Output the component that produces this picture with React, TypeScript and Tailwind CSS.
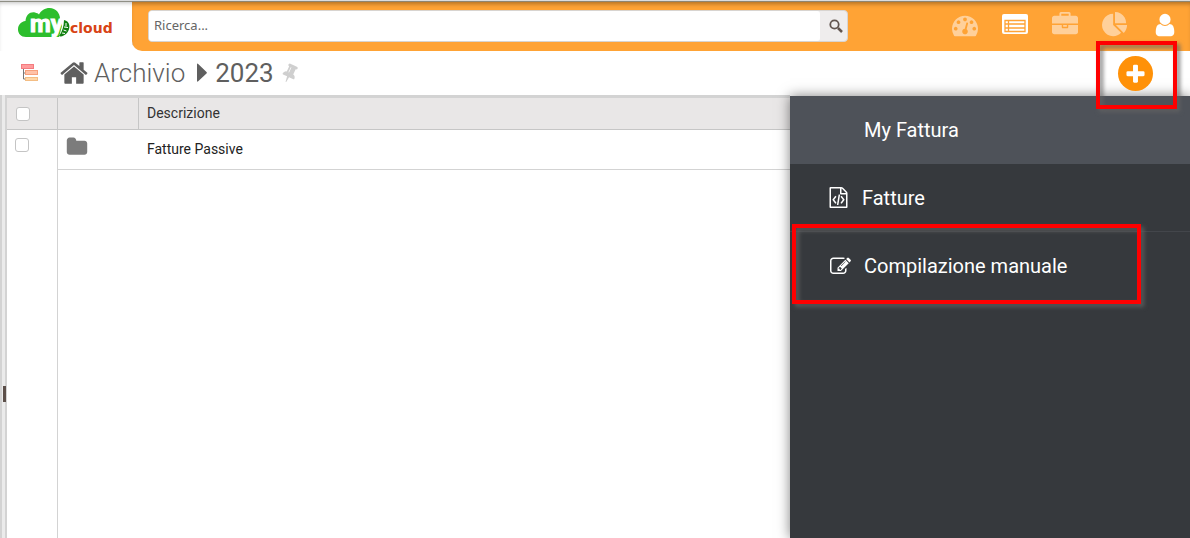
import type { ReactNode } from "react";

const icons = {
  gauge:
    "M384 1152q0-53-37.5-90.5t-90.5-37.5-90.5 37.5-37.5 90.5 37.5 90.5 90.5 37.5 90.5-37.5 37.5-90.5zm192-448q0-53-37.5-90.5t-90.5-37.5-90.5 37.5-37.5 90.5 37.5 90.5 90.5 37.5 90.5-37.5 37.5-90.5zm428 481l101-382q6-26-7.5-48.5t-38.5-29.5-48 6.5-30 39.5l-101 382q-60 5-107 43.5t-63 98.5q-20 77 20 146t117 89 146-20 89-117q16-60-6-117t-72-91zm660-33q0-53-37.5-90.5t-90.5-37.5-90.5 37.5-37.5 90.5 37.5 90.5 90.5 37.5 90.5-37.5 37.5-90.5zm-640-640q0-53-37.5-90.5t-90.5-37.5-90.5 37.5-37.5 90.5 37.5 90.5 90.5 37.5 90.5-37.5 37.5-90.5zm448 192q0-53-37.5-90.5t-90.5-37.5-90.5 37.5-37.5 90.5 37.5 90.5 90.5 37.5 90.5-37.5 37.5-90.5zm320 448q0 261-141 483-19 29-54 29h-1402q-35 0-54-29-141-221-141-483 0-182 71-348t191-286 286-191 348-71 348 71 286 191 191 286 71 348z",
  briefcase:
    "M640 256h512v-128h-512v128zm1152 640v480q0 66-47 113t-113 47h-1472q-66 0-113-47t-47-113v-480h672v160q0 26 19 45t45 19h320q26 0 45-19t19-45v-160h672zm-768 0v128h-256v-128h256zm768-480v384h-1792v-384q0-66 47-113t113-47h352v-160q0-40 28-68t68-28h576q40 0 68 28t28 68v160h352q66 0 113 47t47 113z",
  pie: "M768 890l546 546q-106 108-247.5 168t-298.5 60q-209 0-385.5-103t-279.5-279.5-103-385.5 103-385.5 279.5-279.5 385.5-103v762zm187 6h773q0 157-60 298.5t-168 247.5zm709-128h-768v-768q209 0 385.5 103t279.5 279.5 103 385.5z",
  user: "M1536 1399q0 109-62.5 187t-150.5 78h-854q-88 0-150.5-78t-62.5-187q0-85 8.5-160.5t31.5-152 58.5-131 94-89 134.5-34.5q131 128 313 128t313-128q76 0 134.5 34.5t94 89 58.5 131 31.5 152 8.5 160.5zm-256-887q0 159-112.5 271.5t-271.5 112.5-271.5-112.5-112.5-271.5 112.5-271.5 271.5-112.5 271.5 112.5 112.5 271.5z",
  home: "M1472 992v480q0 26-19 45t-45 19h-384v-384h-256v384h-384q-26 0-45-19t-19-45v-480q0-1 .5-3t.5-3l575-474 575 474q1 2 1 6zm223-69l-62 74q-8 9-21 11h-3q-13 0-21-7l-692-577-692 577q-12 8-24 7-13-2-21-11l-62-74q-8-10-7-23.5t11-21.5l719-599q32-26 76-26t76 26l244 204v-195q0-14 9-23t23-9h192q14 0 23 9t9 23v408l219 182q10 8 11 21.5t-7 23.5z",
  pin: "M800 864v-448q0-14-9-23t-23-9-23 9-9 23v448q0 14 9 23t23 9 23-9 9-23zm672 352q0 26-19 45t-45 19h-429l-51 483q-2 12-10.5 20.5t-20.5 8.5h-1q-27 0-32-27l-76-485h-404q-26 0-45-19t-19-45q0-123 78.5-221.5t177.5-98.5v-512q-52 0-90-38t-38-90 38-90 90-38h640q52 0 90 38t38 90-38 90-90 38v512q99 0 177.5 98.5t78.5 221.5z",
  plus: "M1600 736v192q0 40-28 68t-68 28h-416v416q0 40-28 68t-68 28h-192q-40 0-68-28t-28-68v-416h-416q-40 0-68-28t-28-68v-192q0-40 28-68t68-28h416v-416q0-40 28-68t68-28h192q40 0 68 28t28 68v416h416q40 0 68 28t28 68z",
  folder:
    "M1728 608v704q0 92-66 158t-158 66h-1216q-92 0-158-66t-66-158v-960q0-92 66-158t158-66h320q92 0 158 66t66 158v32h672q92 0 158 66t66 158z",
  code: "M1596 380q28 28 48 76t20 88v1152q0 40-28 68t-68 28h-1344q-40 0-68-28t-28-68v-1600q0-40 28-68t68-28h896q40 0 88 20t76 48zm-444-244v376h376q-10-29-22-41l-313-313q-12-12-41-22zm384 1528v-1024h-416q-40 0-68-28t-28-68v-416h-768v1536h1280zm-928-896q8-11 21-12.5t24 6.5l51 38q11 8 12.5 21t-6.5 24l-182 243 182 243q8 11 6.5 24t-12.5 21l-51 38q-11 8-24 6.5t-21-12.5l-226-301q-14-19 0-38zm802 301q14 19 0 38l-226 301q-8 11-21 12.5t-24-6.5l-51-38q-11-8-12.5-21t6.5-24l182-243-182-243q-8-11-6.5-24t12.5-21l51-38q11-8 24-6.5t21 12.5zm-620 461q-13-2-20.5-13t-5.5-24l138-831q2-13 13-20.5t24-5.5l63 10q13 2 20.5 13t5.5 24l-138 831q-2 13-13 20.5t-24 5.5z",
  edit: "M888 1184l116-116-152-152-116 116v56h96v96h56zm440-720q-16-16-33 1l-350 350q-17 17-1 33t33-1l350-350q17-17 1-33zm80 594v190q0 119-84.5 203.5t-203.5 84.5h-832q-119 0-203.5-84.5t-84.5-203.5v-832q0-119 84.5-203.5t203.5-84.5h832q63 0 117 25 15 7 18 23 3 17-9 29l-49 49q-14 14-32 8-23-6-45-6h-832q-66 0-113 47t-47 113v832q0 66 47 113t113 47h832q66 0 113-47t47-113v-126q0-13 9-22l64-64q15-15 35-7t20 29zm-96-738l288 288-672 672h-288v-288zm444 132l-92 92-288-288 92-92q28-28 68-28t68 28l152 152q28 28 28 68t-28 68z",
};

function Icon({ name, className }: { name: keyof typeof icons; className: string }) {
  return (
    <svg viewBox="0 0 1792 1792" fill="currentColor" aria-hidden="true" className={className}>
      <path d={icons[name]} />
    </svg>
  );
}

function Logo() {
  return (
    <svg viewBox="0 0 100 34" role="img" aria-label="my cloud" className="h-[34px] w-[100px]">
      <path
        d="M8 31C3 31 0 27.500 0 23.500C0 19 3 15.500 7.500 15C8 9 12 5.500 17 6.500C19 7 20 7.500 21 8.500C23 4.500 27 2 31.500 2C38 2 42 7 42 13L44 20L41 31Z"
        fill="#2dbe2d"
      />
      <path d="M46 14C52 15 53 22 49 27C46 30 43 31 41 30C44 26 46 20 46 14Z" fill="#118011" />
      <text
        x="12"
        y="26"
        fontFamily="Roboto, sans-serif"
        fontWeight="700"
        fontSize="24"
        fill="#fff"
        stroke="#fff"
        strokeWidth="1"
      >
        my
      </text>
      <path d="M48 17v3.500M46 21l4 .5M45.500 24l3 1M44 27l3 .5" stroke="#fff" strokeWidth="1" />
      <text x="52" y="27" fontFamily="DejaVu Sans, sans-serif" fontWeight="700" fontSize="14" fill="#d84315">
        cloud
      </text>
    </svg>
  );
}

function NavButton({ label, active, children }: { label: string; active?: boolean; children: ReactNode }) {
  return (
    <button
      type="button"
      aria-label={label}
      className={`flex h-12 w-[50px] items-center justify-center pb-0.5 ${active ? "text-white" : "text-[#ffd09a]"}`}
    >
      {children}
    </button>
  );
}

const highlight =
  "pointer-events-none absolute z-20 border-4 border-[#ff0000] [filter:drop-shadow(3px_3px_2px_rgba(100,100,100,0.8))]";
const checkbox = "block size-[14px] appearance-none rounded-[3px] border border-[#c4c4c4] bg-white checked:bg-[#ffa335]";

export default function App() {
  return (
    <div className="flex min-h-screen flex-col bg-white font-['Roboto',sans-serif] text-[#333]">
      <header className="flex border-t border-[#dcdcdc] bg-white shadow-[inset_0_1px_0_#8f8f85,inset_0_4px_4px_-2px_rgba(0,0,0,0.25)]">
        <a href="#home" className="block w-[132px] shrink-0 pt-[5px] pl-[18px]">
          <Logo />
        </a>
        <div className="flex h-[50px] min-w-0 flex-1 items-center rounded-bl-[10px] bg-[#ffa335] pl-4 shadow-[inset_0_1px_0_#8f8570,inset_0_5px_4px_-2px_rgba(0,0,0,0.3)]">
          <form className="flex h-8 w-[700px] overflow-hidden rounded-[4px] border border-[#d8d4d0] bg-[#efeded]">
            <input
              type="text"
              aria-label="Ricerca"
              placeholder="Ricerca..."
              className="min-w-0 flex-1 rounded-r-[3px] bg-white px-[5px] font-['Noto_Sans',sans-serif] text-[13px] text-[#555] outline-none placeholder:text-[#666]"
            />
            <button type="button" aria-label="Cerca" className="flex w-[27px] items-center justify-center pl-1">
              <svg viewBox="0 0 14 14" fill="none" stroke="#62554f" className="size-[14px]" aria-hidden="true">
                <circle cx="5.500" cy="5.500" r="4.200" strokeWidth="1.800" />
                <path d="M9 9l4 4" strokeWidth="2.500" />
              </svg>
            </button>
          </form>
          <nav className="ml-auto flex">
            <NavButton label="Cruscotto">
              <Icon name="gauge" className="size-[26px]" />
            </NavButton>
            <NavButton label="Elenco" active>
              <svg viewBox="0 0 26 26" className="size-[26px]" aria-hidden="true">
                <rect y="2" width="26" height="20" rx="2" fill="currentColor" />
                <path d="M3 8.500h20v11H3zM3 12h20M3 16h20M6.500 8.500v11" fill="none" stroke="#ffa335" strokeWidth="1.300" />
              </svg>
            </NavButton>
            <NavButton label="Pratiche">
              <Icon name="briefcase" className="size-[26px]" />
            </NavButton>
            <NavButton label="Statistiche">
              <Icon name="pie" className="size-[26px]" />
            </NavButton>
            <NavButton label="Profilo" active>
              <Icon name="user" className="size-[26px]" />
            </NavButton>
          </nav>
        </div>
      </header>

      <div className="flex h-11 items-center pr-[37px] pl-5">
        <button type="button" aria-label="Struttura" className="w-[39px]">
          <svg viewBox="0 0 20 18" className="h-[18px] w-5" aria-hidden="true">
            <path d="M3.500 5v10H7M3.500 9H7" fill="none" stroke="#777" />
            <rect x="1.500" y=".5" width="12" height="4" fill="#ff9c9c" stroke="#f47c80" />
            <rect x="5.500" y="6.500" width="12" height="4" fill="#ffc2a8" stroke="#f6a07c" />
            <rect x="5.500" y="13.500" width="12" height="3" fill="#ffd7a8" stroke="#f3bd84" />
          </svg>
        </button>
        <nav className="flex items-center text-[26px] leading-8 text-[#5f5f5f]">
          <a href="#archivio" className="flex items-center gap-[5px] font-light">
            <Icon name="home" className="size-[30px]" />
            Archivio
          </a>
          <svg viewBox="0 0 10 20" fill="currentColor" className="mr-2 ml-3 h-5 w-[10px]" aria-hidden="true">
            <path d="M0 1.500Q0 0 1.200 1L9.500 9Q10.300 9.800 9.500 10.500L1.200 18.300Q0 19.200 0 17.800Z" />
          </svg>
          <span>2023</span>
        </nav>
        <button type="button" aria-label="Fissa" className="ml-1.5 text-[#cfcfcf]">
          <Icon name="pin" className="size-5 rotate-[25deg]" />
        </button>
        <div className="relative ml-auto">
          <button
            type="button"
            aria-label="Aggiungi"
            className="flex size-[35px] items-center justify-center rounded-full bg-[#ff9108] pt-0.5 text-white"
          >
            <Icon name="plus" className="size-[23px]" />
          </button>
          <div className={`${highlight} -top-[15px] -right-6 -bottom-[18px] -left-[22px]`} />
        </div>
      </div>

      <main className="flex flex-1">
        <div className="flex w-[7px] shrink-0 items-center border-r-2 border-l-2 border-[#d3d3d3] bg-[#ebebeb]">
          <div className="mt-[154px] ml-px h-4 w-[3px] shrink-0 bg-[#5c4f49]" />
        </div>
        <section className="flex min-w-0 flex-1 flex-col border-t-[3px] border-[#d3d3d3]">
          <table className="w-full border-separate border-spacing-0 text-left text-sm">
            <thead>
              <tr className="h-8 bg-[#e9e7e7]">
                <th className="w-[51px] border-r border-b border-[#c6c6c6] pl-[9px]">
                  <input type="checkbox" aria-label="Seleziona tutto" className={checkbox} />
                </th>
                <th className="w-[81px] border-r border-b border-[#c6c6c6]" aria-label="Tipo" />
                <th className="border-b border-[#c6c6c6] pb-0.5 pl-2 font-normal">Descrizione</th>
              </tr>
            </thead>
            <tbody>
              <tr className="h-10">
                <td className="border-r border-[#d3d3d3] pt-2 pl-2 align-top">
                  <input type="checkbox" aria-label="Seleziona Fatture Passive" className={checkbox} />
                </td>
                <td className="border-b border-[#d3d3d3] pt-1.5 pl-2 align-top text-[#7c7c7c]">
                  <Icon name="folder" className="size-[22px]" />
                </td>
                <td className="border-b border-[#d3d3d3] pb-0.5 pl-2 text-[#222]">Fatture Passive</td>
              </tr>
            </tbody>
          </table>
          <div className="w-[51px] flex-1 border-r border-[#d3d3d3]" />
        </section>
        <aside className="mt-px w-[400px] shrink-0 bg-[#36393d] text-xl text-white shadow-[0_0_12px_rgba(0,0,0,0.5)]">
          <h2 className="flex h-[68px] items-center bg-[#4e5259] pl-[74px]">My Fattura</h2>
          <ul>
            <li className="border-b border-[#43464b]">
              <a href="#fatture" className="flex h-[67px] items-center gap-[13px] pl-[38px]">
                <Icon name="code" className="size-[21px]" />
                Fatture
              </a>
            </li>
            <li className="relative">
              <a href="#compilazione" className="flex h-[68px] items-center gap-[13px] pl-10">
                <Icon name="edit" className="size-[21px]" />
                Compilazione manuale
              </a>
              <div className={`${highlight} -top-2 right-[49px] -bottom-1 left-0.5`} />
            </li>
          </ul>
        </aside>
      </main>
    </div>
  );
}
